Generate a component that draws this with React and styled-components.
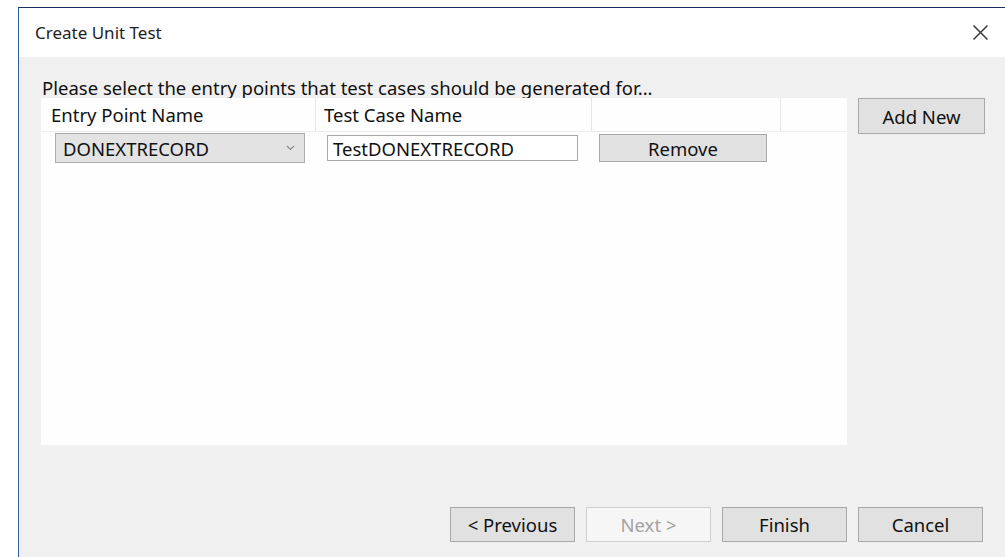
import React from 'react'
import styled, { createGlobalStyle } from 'styled-components'

const GlobalStyle = createGlobalStyle`
    html, body, #root {
        margin: 0;
        height: 100%;
    }
    body {
        background: #ffffff;
        font-family: "Noto Sans", "Open Sans", sans-serif;
        color: #111;
        overflow: hidden;
    }
`

const Desktop = styled.div`
    height: 100%;
    box-sizing: border-box;
    padding: 7px 0 0 18px;
`

const Window = styled.div`
    height: 100%;
    display: flex;
    flex-direction: column;
    border-top: 1px solid #1c2c5e;
    border-left: 1px solid #2f5fa8;
    box-shadow: inset 0 1px 0 #cfe3f5, inset 1px 0 0 #d6e6f6;
`

const TitleBar = styled.div`
    height: 49px;
    display: flex;
    align-items: center;
    justify-content: space-between;
    padding: 0 16px 0 16px;
    background: #ffffff;
    font-size: 17px;
    color: #1e1e1e;
`

const CloseIcon = () => (
    <svg width="17" height="17" viewBox="0 0 17 17">
        <path d="M1.5 1.5 L15.5 15.5 M15.5 1.5 L1.5 15.5" stroke="#3a3a3a" strokeWidth="1.5" fill="none" />
    </svg>
)

const Body = styled.div`
    flex: 1;
    display: flex;
    flex-direction: column;
    background: #f0f0f0;
    padding: 20px 20px 16px 22px;
`

const Prompt = styled.div`
    font-size: 18.5px;
    line-height: 21px;
    padding-left: 1px;
`

const Content = styled.div`
    display: flex;
    align-items: flex-start;
    gap: 11px;
`

const Panel = styled.div`
    width: 806px;
    height: 347px;
    background: #fefefe;
`

const cols = '275px 276px 189px 1fr'

const HeaderRow = styled.div`
    display: grid;
    grid-template-columns: ${cols};
    height: 33px;
    border-bottom: 1px solid #ececec;
`

const HeaderCell = styled.div`
    display: flex;
    align-items: center;
    padding-left: ${p => p.$pad || 0}px;
    font-size: 18.5px;
    border-right: 1px solid #e6e6e6;
    &:last-child { border-right: none; }
`

const Row = styled.div`
    display: grid;
    grid-template-columns: ${cols};
    align-items: center;
    height: 32px;
`

const Cell = styled.div`
    padding-left: ${p => p.$pad || 0}px;
`

const Select = styled.div`
    width: 250px;
    height: 30px;
    box-sizing: border-box;
    display: flex;
    align-items: center;
    justify-content: space-between;
    padding: 0 9px 0 7px;
    background: #e3e3e3;
    border: 1px solid #adadad;
    font-size: 18.5px;
`

const Chevron = () => (
    <svg width="9" height="6" viewBox="0 0 9 6">
        <path d="M1 1 L4.5 4.5 L8 1" stroke="#8a8a8a" strokeWidth="1.2" fill="none" />
    </svg>
)

const TextBox = styled.div`
    width: 251px;
    height: 26px;
    box-sizing: border-box;
    display: flex;
    align-items: center;
    padding-left: 5px;
    background: #ffffff;
    border: 1px solid #a9a9a9;
    font-size: 18.5px;
`

const Button = styled.button`
    width: ${p => p.$w || 125}px;
    height: ${p => p.$h || 35}px;
    box-sizing: border-box;
    padding: 0;
    font-family: inherit;
    font-size: 18.5px;
    color: ${p => (p.disabled ? '#a3a3a3' : '#111')};
    background: ${p => (p.disabled ? '#f6f6f6' : '#e1e1e1')};
    border: 1px solid ${p => (p.disabled ? '#cfcfcf' : '#a8a8a8')};
    border-radius: 0;
`

const Footer = styled.div`
    margin-top: auto;
    display: flex;
    justify-content: flex-end;
    gap: 11px;
    padding-right: 2px;
`

export default function App() {
    return (
        <>
            <GlobalStyle />
            <Desktop>
                <Window>
                    <TitleBar>
                        <span>Create Unit Test</span>
                        <CloseIcon />
                    </TitleBar>
                    <Body>
                        <Prompt>Please select the entry points that test cases should be generated for...</Prompt>
                        <Content>
                            <Panel>
                                <HeaderRow>
                                    <HeaderCell $pad={10}>Entry Point Name</HeaderCell>
                                    <HeaderCell $pad={8}>Test Case Name</HeaderCell>
                                    <HeaderCell />
                                    <HeaderCell />
                                </HeaderRow>
                                <Row>
                                    <Cell $pad={14}>
                                        <Select>
                                            <span>DONEXTRECORD</span>
                                            <Chevron />
                                        </Select>
                                    </Cell>
                                    <Cell $pad={11}>
                                        <TextBox>TestDONEXTRECORD</TextBox>
                                    </Cell>
                                    <Cell $pad={7}>
                                        <Button $w={168} $h={28}>Remove</Button>
                                    </Cell>
                                    <Cell />
                                </Row>
                            </Panel>
                            <Button $w={127} $h={36}>Add New</Button>
                        </Content>
                        <Footer>
                            <Button>&lt; Previous</Button>
                            <Button disabled>Next &gt;</Button>
                            <Button>Finish</Button>
                            <Button>Cancel</Button>
                        </Footer>
                    </Body>
                </Window>
            </Desktop>
        </>
    )
}
